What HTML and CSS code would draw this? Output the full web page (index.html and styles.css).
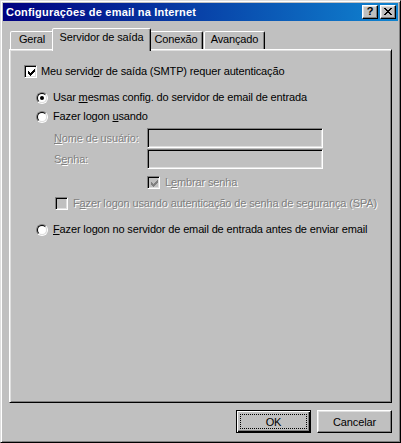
FILE: index.html
```html
<!DOCTYPE html>
<html lang="pt">
<head>
<meta charset="utf-8">
<title>Configurações de email na Internet</title>
<link rel="stylesheet" href="styles.css">
</head>
<body>
<div class="window">
  <div class="titlebar">
    <span class="title">Configurações de email na Internet</span>
    <div class="tb-buttons">
      <span class="tb-btn help">?</span>
      <span class="tb-btn close">
        <svg width="8" height="7" viewBox="0 0 8 7" shape-rendering="crispEdges"><path d="M0 0h2v1h-2z M6 0h2v1h-2z M1 1h2v1h-2z M5 1h2v1h-2z M2 2h4v1h-4z M3 3h2v1h-2z M2 4h4v1h-4z M1 5h2v1h-2z M5 5h2v1h-2z M0 6h2v1h-2z M6 6h2v1h-2z"/></svg>
      </span>
    </div>
  </div>
  <div class="client">
    <div class="tabs">
      <div class="tab t-geral">Geral</div>
      <div class="tab active t-serv">Servidor de saída</div>
      <div class="tab t-con">Conexão</div>
      <div class="tab t-av">Avançado</div>
    </div>
    <div class="panel">
      <div class="row r-main">
        <span class="check"><svg class="ck" width="7" height="7" viewBox="0 0 7 7" shape-rendering="crispEdges"><path d="M6 0h1v1h-1z M5 1h2v1h-2z M0 2h1v1h-1z M4 2h3v1h-3z M0 3h2v1h-2z M3 3h3v1h-3z M0 4h5v1h-5z M1 5h3v1h-3z M2 6h1v1h-1z"/></svg></span>
        <span class="lbl">Meu servid<u>o</u>r de saída (SMTP) requer autenticação</span>
      </div>
      <div class="row r-radio1">
        <span class="radio"><span class="radio-in"><span class="dot"></span></span></span>
        <span class="lbl">Usar <u>m</u>esmas config. do servidor de email de entrada</span>
      </div>
      <div class="row r-radio2">
        <span class="radio"><span class="radio-in"></span></span>
        <span class="lbl">Fazer logon <u>u</u>sando</span>
      </div>
      <div class="field f-name">
        <span class="flabel disabled"><u>N</u>ome de usuário:</span>
        <span class="input"></span>
      </div>
      <div class="field f-pass">
        <span class="flabel disabled">S<u>e</u>nha:</span>
        <span class="input"></span>
      </div>
      <div class="row r-lembrar">
        <span class="check off"><svg class="ck" width="7" height="7" viewBox="0 0 7 7" shape-rendering="crispEdges"><path d="M6 0h1v1h-1z M5 1h2v1h-2z M0 2h1v1h-1z M4 2h3v1h-3z M0 3h2v1h-2z M3 3h3v1h-3z M0 4h5v1h-5z M1 5h3v1h-3z M2 6h1v1h-1z"/></svg></span>
        <span class="lbl disabled">L<u>e</u>mbrar senha</span>
      </div>
      <div class="row r-spa">
        <span class="check off"></span>
        <span class="lbl disabled">F<u>a</u>zer logon usando autenticação de senha de segurança (SPA)</span>
      </div>
      <div class="row r-radio3">
        <span class="radio"><span class="radio-in"></span></span>
        <span class="lbl"><u>F</u>azer logon no servidor de email de entrada antes de enviar email</span>
      </div>
    </div>
    <div class="actions">
      <button class="btn default"><span class="focus">OK</span></button>
      <button class="btn">Cancelar</button>
    </div>
  </div>
</div>
</body>
</html>
```
FILE: styles.css
```css
html, body {
  margin: 0;
  background: #c0c0c0;
}
body {
  font: 11px "Liberation Sans", Arial, sans-serif;
  letter-spacing: -0.14px;
  color: #000;
}
.window {
  width: 401px;
  height: 443px;
  box-sizing: border-box;
  background: #c0c0c0;
  border: 1px solid;
  border-color: #dfdfdf #000 #000 #dfdfdf;
  box-shadow: inset 1px 1px #fff, inset -1px -1px #808080;
  padding: 2px;
  display: flex;
  flex-direction: column;
}
.titlebar {
  height: 18px;
  flex: none;
  display: flex;
  align-items: center;
  background: linear-gradient(to right, #000080, #1084d0);
  padding: 0 2px 0 3px;
}
.title {
  flex: 1;
  color: #fff;
  font-weight: bold;
  letter-spacing: 0.2px;
  white-space: nowrap;
}
.tb-buttons {
  display: flex;
  gap: 2px;
}
.tb-btn {
  width: 16px;
  height: 14px;
  box-sizing: border-box;
  background: #c0c0c0;
  border: 1px solid;
  border-color: #fff #000 #000 #fff;
  box-shadow: inset -1px -1px #808080, inset 1px 1px #dfdfdf;
  display: flex;
  align-items: center;
  justify-content: center;
  color: #000;
}
.help {
  font-weight: bold;
  font-size: 11px;
  line-height: 1;
  padding-bottom: 1px;
}
.close svg {
  fill: #000;
  display: block;
  margin: 0 1px 1px 0;
}
.client {
  flex: 1;
  display: flex;
  flex-direction: column;
  padding: 7px 6px 0 6px;
}
.tabs {
  display: flex;
  align-items: flex-end;
  height: 21px;
  padding-left: 1px;
}
.tab {
  box-sizing: border-box;
  height: 18px;
  border: 1px solid;
  border-bottom: none;
  border-color: #fff #000 transparent #fff;
  box-shadow: inset -1px 0 #808080;
  border-radius: 2px 2px 0 0;
  display: flex;
  justify-content: center;
  align-items: flex-start;
  padding-top: 1px;
  line-height: 13px;
  white-space: nowrap;
  background: #c0c0c0;
}
.tab.active {
  height: 23px;
  margin: 0 -2px -2px;
  position: relative;
  z-index: 1;
  padding-top: 2px;
}
.t-geral { width: 44px; }
.t-serv { width: 99px; }
.t-con { width: 54px; }
.t-av { width: 61px; margin-left: 1px; }
.panel {
  box-sizing: border-box;
  height: 354px;
  border: 1px solid;
  border-color: #fff #000 #000 #fff;
  box-shadow: inset 1px 1px #dfdfdf, inset -1px -1px #808080;
  padding: 15px 0 0 14px;
}
.row {
  display: flex;
  align-items: center;
  height: 13px;
  gap: 4px;
  white-space: nowrap;
}
.lbl {
  line-height: 13px;
}
u {
  text-underline-offset: 1px;
}
.check {
  width: 13px;
  height: 13px;
  box-sizing: border-box;
  flex: none;
  background: #fff;
  border: 1px solid;
  border-color: #808080 #fff #fff #808080;
  box-shadow: inset 1px 1px #000, inset -1px -1px #dfdfdf;
  display: flex;
  align-items: center;
  justify-content: center;
  color: #000;
}
.check .ck {
  display: block;
  fill: currentColor;
  margin: 1px 0 0 1px;
}
.check.off {
  background: #c0c0c0;
  color: #808080;
}
.radio {
  width: 12px;
  height: 12px;
  box-sizing: border-box;
  flex: none;
  border-radius: 50%;
  border: 1px solid;
  border-color: #808080 #fff #fff #808080;
  display: flex;
}
.radio-in {
  flex: 1;
  border-radius: 50%;
  border: 1px solid;
  border-color: #000 #dfdfdf #dfdfdf #000;
  background: #fff;
  display: flex;
  align-items: center;
  justify-content: center;
}
.dot {
  width: 4px;
  height: 4px;
  border-radius: 50%;
  background: #000;
}
.r-radio1, .r-radio2, .r-radio3 { gap: 5px; }
.r-radio1 { margin: 13px 0 0 12px; }
.r-radio2 { margin: 6px 0 0 12px; }
.field {
  display: flex;
  align-items: center;
  height: 20px;
  margin-left: 30px;
}
.f-name { margin-top: 5px; }
.f-pass { margin-top: 1px; }
.flabel {
  width: 93px;
  flex: none;
  white-space: nowrap;
}
.input {
  width: 176px;
  height: 20px;
  box-sizing: border-box;
  border: 1px solid;
  border-color: #808080 #fff #fff #808080;
  box-shadow: inset 1px 1px #000, inset -1px -1px #dfdfdf;
  background: #c0c0c0;
}
.disabled {
  color: #808080;
  text-shadow: 1px 1px 0 #fff;
}
.r-lembrar { margin: 7px 0 0 123px; gap: 5px; }
.r-spa { margin: 8px 0 0 31px; gap: 5px; }
.r-radio3 { margin: 13px 0 0 12px; }
.actions {
  display: flex;
  justify-content: flex-end;
  gap: 6px;
  margin-top: 7px;
}
.btn {
  width: 75px;
  height: 23px;
  box-sizing: border-box;
  margin: 0;
  font: 11px "Liberation Sans", Arial, sans-serif;
  letter-spacing: -0.14px;
  color: #000;
  background: #c0c0c0;
  border: 1px solid;
  border-color: #fff #000 #000 #fff;
  box-shadow: inset -1px -1px #808080, inset 1px 1px #dfdfdf;
  padding: 0;
  display: flex;
  align-items: center;
  justify-content: center;
}
.btn.default {
  border-color: #000;
  box-shadow: inset 1px 1px #fff, inset -1px -1px #000, inset -2px -2px #808080;
  padding: 3px;
}
.focus {
  flex: 1;
  align-self: stretch;
  border: 1px dotted #000;
  display: flex;
  align-items: center;
  justify-content: center;
}
```
